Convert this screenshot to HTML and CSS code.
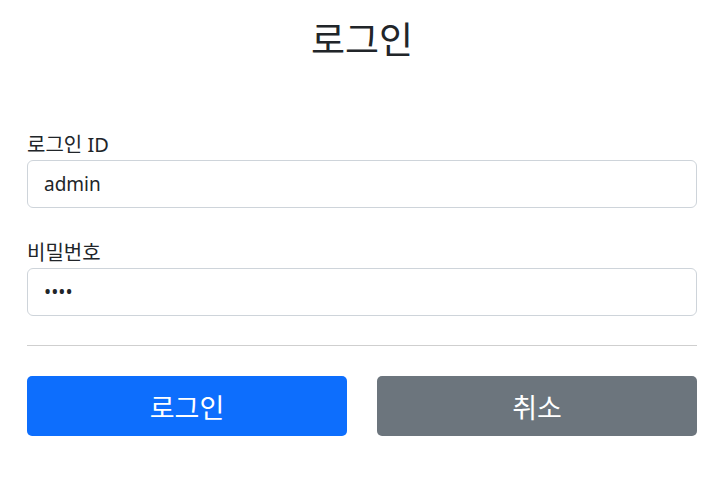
FILE: index.html
```html
<!DOCTYPE html>
<html lang="ko">
<head>
<meta charset="utf-8">
<link rel="stylesheet" href="styles.css">
</head>
<body>
<div class="container">
  <div class="title-wrap"><h2 class="title">로그인</h2></div>
  <form class="form">
    <div class="field">
      <label class="label" for="loginId">로그인 ID</label>
      <input class="input" id="loginId" type="text" value="admin">
    </div>
    <div class="field">
      <label class="label" for="password">비밀번호</label>
      <input class="input" id="password" type="password" value="test">
    </div>
    <hr class="divider">
    <div class="actions">
      <button class="btn btn-primary" type="button">로그인</button>
      <button class="btn btn-secondary" type="button">취소</button>
    </div>
  </form>
</div>
</body>
</html>
```
FILE: styles.css
```css
* { box-sizing: border-box; }
body {
  margin: 0;
  background: #fff;
  color: #212529;
  font-family: "Noto Sans", "Noto Sans CJK KR", sans-serif;
}
.container {
  padding: 0 21px 0 27px;
}
.title-wrap {
  text-align: center;
  padding-top: 14px;
  height: 128px;
}
.title {
  margin: 0;
  font-size: 37px;
  font-weight: 400;
  line-height: 52px;
}
.form { display: block; }
.field { margin-bottom: 28px; }
.field:last-of-type { margin-bottom: 0; }
.label {
  display: block;
  font-size: 20px;
  line-height: 28px;
  height: 32px;
  padding-top: 3px;
}
.input {
  display: block;
  width: 100%;
  height: 48px;
  padding: 8px 16px;
  font-family: inherit;
  font-size: 19px;
  color: #212529;
  background: #fff;
  border: 1px solid #ced4da;
  border-radius: 6px;
  outline: none;
}
.divider {
  margin: 29px 0 30px;
  border: 0;
  border-top: 1px solid #cfcfcf;
}
.actions {
  display: grid;
  grid-template-columns: 1fr 1fr;
  gap: 30px;
}
.btn {
  height: 60px;
  border: 0;
  border-radius: 5px;
  color: #fff;
  font-family: inherit;
  font-size: 27px;
  cursor: pointer;
}
.btn-primary { background: #0d6efd; }
.btn-secondary { background: #6c757d; }
```
